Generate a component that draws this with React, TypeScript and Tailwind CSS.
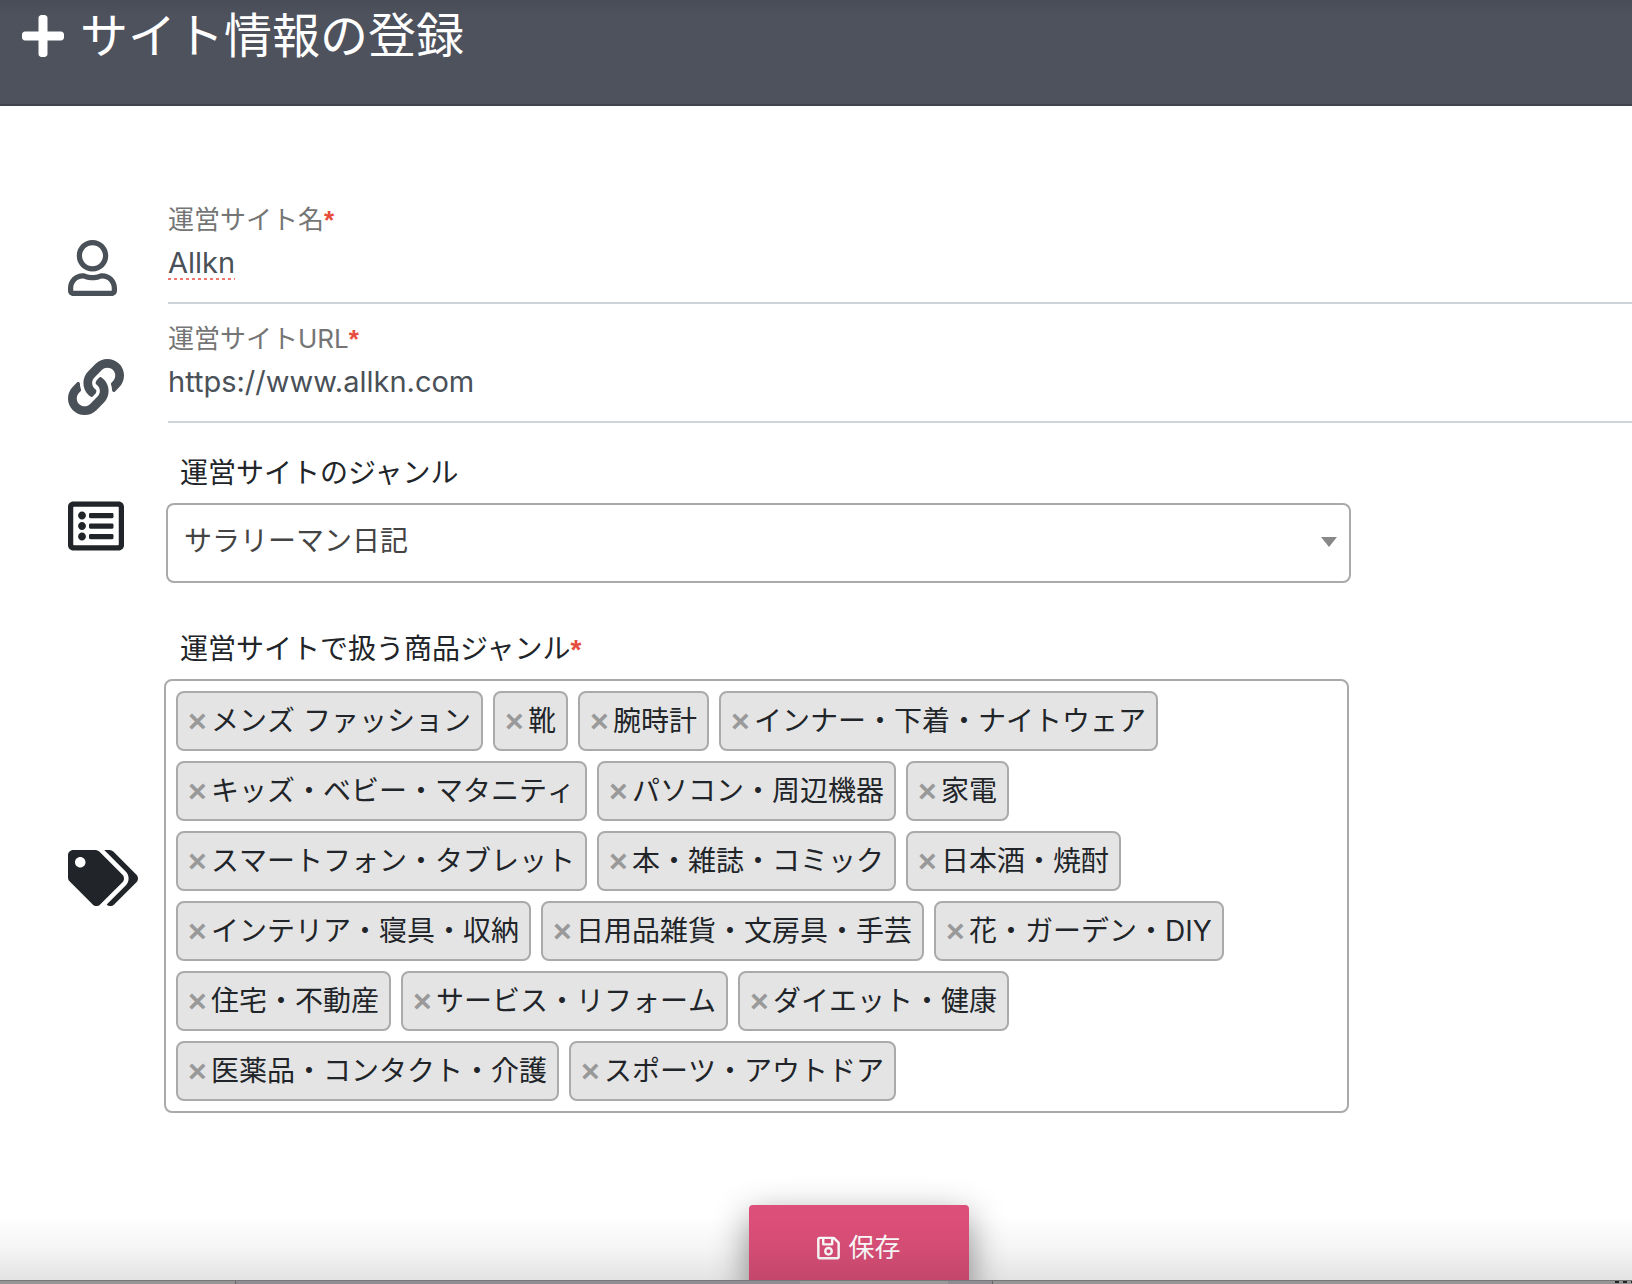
import React from "react";
import { FaLink, FaPlus, FaRegListAlt, FaRegSave, FaRegUser, FaTags } from "react-icons/fa";

const PRODUCT_GENRES = [
  "メンズ ファッション",
  "靴",
  "腕時計",
  "インナー・下着・ナイトウェア",
  "キッズ・ベビー・マタニティ",
  "パソコン・周辺機器",
  "家電",
  "スマートフォン・タブレット",
  "本・雑誌・コミック",
  "日本酒・焼酎",
  "インテリア・寝具・収納",
  "日用品雑貨・文房具・手芸",
  "花・ガーデン・DIY",
  "住宅・不動産",
  "サービス・リフォーム",
  "ダイエット・健康",
  "医薬品・コンタクト・介護",
  "スポーツ・アウトドア",
];

function Required() {
  return <span className="font-['Liberation_Sans',sans-serif] font-bold text-[#e74c3c]">*</span>;
}

interface TextFieldProps {
  id: string;
  label: string;
  value: string;
  icon: React.ReactNode;
  misspelled?: boolean;
}

/**
 * Icon, small grey label and an underlined text input.
 */
function TextField({ id, label, value, icon, misspelled = false }: TextFieldProps) {
  return (
    <div className="flex h-[119px] text-[#495057]">
      <div className="w-[100px] shrink-0 pt-[55px]">{icon}</div>
      <div className="flex flex-1 flex-col border-b-2 border-[#ced4da]">
        <label htmlFor={id} className="pt-[15px] text-[26px] leading-10 text-[#757575]">
          {label}
          <Required />
        </label>
        <input
          id={id}
          type="text"
          defaultValue={value}
          spellCheck={false}
          className={
            misspelled
              ? "h-11 w-full bg-transparent text-[29px] leading-10 outline-none underline decoration-dotted decoration-[#f0776c] decoration-[3px] underline-offset-[5px] [text-decoration-skip-ink:none]"
              : "h-11 w-full bg-transparent text-[29px] leading-10 outline-none"
          }
        />
      </div>
    </div>
  );
}

/**
 * A selected genre with its remove button.
 */
function GenreChip({ name }: { name: string }) {
  return (
    <li className="flex h-[60px] items-center rounded-lg border-2 border-[#aaaaaa] bg-[#e4e4e4] px-[10px] [font-kerning:none]">
      <button
        type="button"
        aria-label={`${name}を削除`}
        className="w-[23px] text-left font-['Liberation_Sans',sans-serif] text-[32px] leading-8 font-bold text-[#999999]"
      >
        ×
      </button>
      <span className="whitespace-nowrap">{name}</span>
    </li>
  );
}

export default function App() {
  return (
    <div className="relative bg-white font-['Inter','Noto_Sans_CJK_JP',sans-serif] text-[28px] leading-10 text-[#212529]">
      <header className="flex h-[106px] items-start border-b-2 border-[#41444e] bg-[#4e525d] bg-linear-to-b from-[#484c57] to-[#4e525d] to-15% pl-[22px] text-white">
        <h1 className="flex h-[72px] items-center gap-4 text-[48px] leading-[72px]">
          <FaPlus className="h-12 w-[42px]" />
          サイト情報の登録
        </h1>
      </header>

      <form className="overflow-hidden pt-[79px] pl-[68px]">
        <TextField
          id="site-name"
          label="運営サイト名"
          value="Allkn"
          misspelled
          icon={<FaRegUser className="h-14 w-[49px]" />}
        />
        <TextField
          id="site-url"
          label="運営サイトURL"
          value="https://www.allkn.com"
          icon={<FaLink className="size-14" />}
        />

        <div className="flex pt-[30px]">
          <div className="w-[98px] shrink-0 pt-[45px]">
            <FaRegListAlt className="size-14" />
          </div>
          <div className="w-full max-w-[1185px]">
            <label htmlFor="site-genre" className="block h-[50px] pl-[14px]">
              運営サイトのジャンル
            </label>
            <div className="relative">
              <select
                id="site-genre"
                className="block h-20 w-full appearance-none rounded-lg border-2 border-[#aaaaaa] bg-white px-4 pb-1 text-[#444444]"
              >
                <option>サラリーマン日記</option>
              </select>
              <svg
                viewBox="0 0 16 10"
                className="pointer-events-none absolute top-[34px] right-[14px] h-[10px] w-4"
                fill="#888888"
              >
                <path d="M0 0h16L8 10z" />
              </svg>
            </div>
          </div>
        </div>

        <div className="flex pt-[46px]">
          <div className="w-24 shrink-0 pt-[221px]">
            <FaTags className="h-14 w-[70px]" />
          </div>
          <div className="w-full max-w-[1185px]">
            <div id="product-genres" className="h-[50px] pl-4">
              運営サイトで扱う商品ジャンル
              <Required />
            </div>
            <ul
              aria-labelledby="product-genres"
              className="flex flex-wrap gap-[10px] rounded-lg border-2 border-[#aaaaaa] pt-[10px] pr-20 pb-[10px] pl-[10px]"
            >
              {PRODUCT_GENRES.map((name) => (
                <GenreChip key={name} name={name} />
              ))}
            </ul>
          </div>
        </div>

        <div className="-ml-[68px] flex h-[167px] justify-center pt-[92px] pl-[86px]">
          <button
            type="button"
            className="flex h-[86px] w-[220px] items-center justify-center gap-2 rounded-sm bg-[#dc4f79] text-[26px] text-white shadow-[0_12px_36px_rgba(0,0,0,0.45)]"
          >
            <FaRegSave className="h-[26px] w-[23px]" />
            保存
          </button>
        </div>
      </form>

      <footer className="flex h-1 border-t border-[#777777] bg-[#969696]">
        <div className="w-[236px] border-r border-[#666666]" />
        <div className="w-[564px] bg-[#8f8d92]" />
        <div className="w-[148px] bg-[#999999]" />
        <div className="w-[45px] border-r border-[#666666] bg-[#8f8d92]" />
        <div className="flex flex-1 justify-end gap-1">
          <span className="h-[2px] w-1 bg-[#222222]" />
          <span className="h-[2px] w-1 bg-[#222222]" />
          <span className="h-[2px] w-px bg-[#222222]" />
        </div>
      </footer>
      <div className="pointer-events-none absolute inset-x-0 bottom-1 h-16 bg-linear-to-b from-transparent via-black/4 to-black/11" />
    </div>
  );
}
